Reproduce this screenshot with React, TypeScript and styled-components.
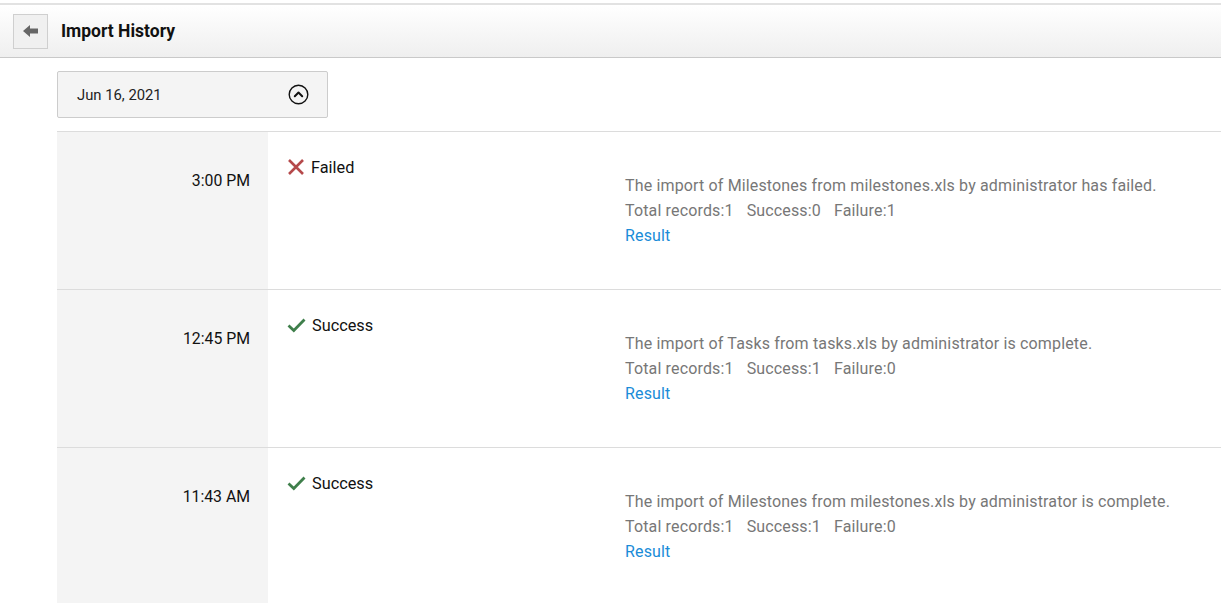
import React from 'react';
import styled, { createGlobalStyle } from 'styled-components';

const GlobalStyle = createGlobalStyle`
  html, body {
    margin: 0;
    padding: 0;
    background: #fff;
    font-family: Roboto, "Liberation Sans", Arial, sans-serif;
  }
`;

const Page = styled.div`
  width: 1221px;
  height: 603px;
  overflow: hidden;
  padding-top: 3px;
  box-sizing: border-box;
`;

const Header = styled.div`
  display: flex;
  align-items: center;
  gap: 13px;
  height: 52px;
  padding-left: 13px;
  border-top: 2px solid #e2e2e2;
  border-bottom: 1px solid #c9c9c9;
  background: linear-gradient(#ffffff, #efefef);
`;

const BackButton = styled.button`
  width: 35px;
  height: 35px;
  padding: 0;
  display: flex;
  align-items: center;
  justify-content: center;
  background: #f0f0f0;
  border: 1px solid #cfcfcf;
  cursor: pointer;
`;

const Title = styled.h1`
  margin: 0;
  font-size: 17.5px;
  font-weight: 700;
  color: #111;
`;

const Body = styled.div`
  padding: 13px 0 0 57px;
`;

const DateToggle = styled.div`
  width: 271px;
  height: 47px;
  box-sizing: border-box;
  display: flex;
  align-items: center;
  justify-content: space-between;
  padding: 0 18px 0 19px;
  background: #f4f4f4;
  border: 1px solid #cccccc;
  border-radius: 2px;
  font-size: 14.8px;
  color: #222;
  margin-bottom: 13px;
`;

const List = styled.div`
  border-top: 1px solid #dcdcdc;
`;

const Row = styled.div`
  display: grid;
  grid-template-columns: 211px 1fr;
  height: 157px;
  border-bottom: 1px solid #dcdcdc;
`;

const TimeCell = styled.div`
  background: #f4f4f4;
  text-align: right;
  padding: 39px 18px 0 0;
  font-size: 15.8px;
  color: #111;
`;

const DetailCell = styled.div`
  display: grid;
  grid-template-columns: 338px 1fr;
  padding: 25px 0 0 19px;
`;

const Status = styled.div`
  display: flex;
  align-items: center;
  gap: 6px;
  height: 20px;
  font-size: 16.3px;
  color: #111;
`;

const Info = styled.div`
  padding-top: 16px;
  font-size: 16px;
  letter-spacing: 0.15px;
  line-height: 25px;
  color: #777;
`;

const Counts = styled.div`
  display: flex;
  gap: 13px;
`;

const ResultLink = styled.a`
  color: #1a8cd8;
  text-decoration: none;
  cursor: pointer;
`;

const BackArrow = () => (
  <svg width="16" height="14" viewBox="0 0 16 14">
    <path d="M0 7 L7 1 L7 4.5 L15 4.5 L15 9.5 L7 9.5 L7 13 Z" fill="#666" />
  </svg>
);

const ChevronCircle = () => (
  <svg width="21" height="21" viewBox="0 0 21 21">
    <circle cx="10.5" cy="10.5" r="9.3" fill="none" stroke="#111" strokeWidth="1.4" />
    <path d="M6.8 12.2 L10.5 8.5 L14.2 12.2" fill="none" stroke="#111" strokeWidth="2" strokeLinecap="round" strokeLinejoin="round" />
  </svg>
);

const FailIcon = () => (
  <svg width="18" height="18" viewBox="0 0 18 18">
    <path d="M2 2 L16 16 M16 2 L2 16" stroke="#b5494b" strokeWidth="2.6" />
  </svg>
);

const SuccessIcon = () => (
  <svg width="19" height="16" viewBox="0 0 19 16">
    <path d="M1.5 8.5 L6.8 13.5 L17.5 2.5" fill="none" stroke="#3f7f4b" strokeWidth="2.8" />
  </svg>
);

interface ImportEntry {
  time: string;
  ok: boolean;
  entity: string;
  file: string;
  success: number;
  failure: number;
}

const ENTRIES: ImportEntry[] = [
  { time: '3:00 PM', ok: false, entity: 'Milestones', file: 'milestones.xls', success: 0, failure: 1 },
  { time: '12:45 PM', ok: true, entity: 'Tasks', file: 'tasks.xls', success: 1, failure: 0 },
  { time: '11:43 AM', ok: true, entity: 'Milestones', file: 'milestones.xls', success: 1, failure: 0 },
];

const App: React.FC = () => (
  <>
    <GlobalStyle />
    <Page>
      <Header>
        <BackButton aria-label="Back">
          <BackArrow />
        </BackButton>
        <Title>Import History</Title>
      </Header>
      <Body>
        <DateToggle>
          <span>Jun 16, 2021</span>
          <ChevronCircle />
        </DateToggle>
        <List>
          {ENTRIES.map((e, idx) => (
            <Row key={`import-${idx}`}>
              <TimeCell>{e.time}</TimeCell>
              <DetailCell>
                <Status>
                  {e.ok ? <SuccessIcon /> : <FailIcon />}
                  {e.ok ? 'Success' : 'Failed'}
                </Status>
                <Info>
                  <div>
                    The import of {e.entity} from {e.file} by administrator {e.ok ? 'is complete.' : 'has failed.'}
                  </div>
                  <Counts>
                    <span>Total records:1</span>
                    <span>Success:{e.success}</span>
                    <span>Failure:{e.failure}</span>
                  </Counts>
                  <ResultLink>Result</ResultLink>
                </Info>
              </DetailCell>
            </Row>
          ))}
        </List>
      </Body>
    </Page>
  </>
);

export default App;
